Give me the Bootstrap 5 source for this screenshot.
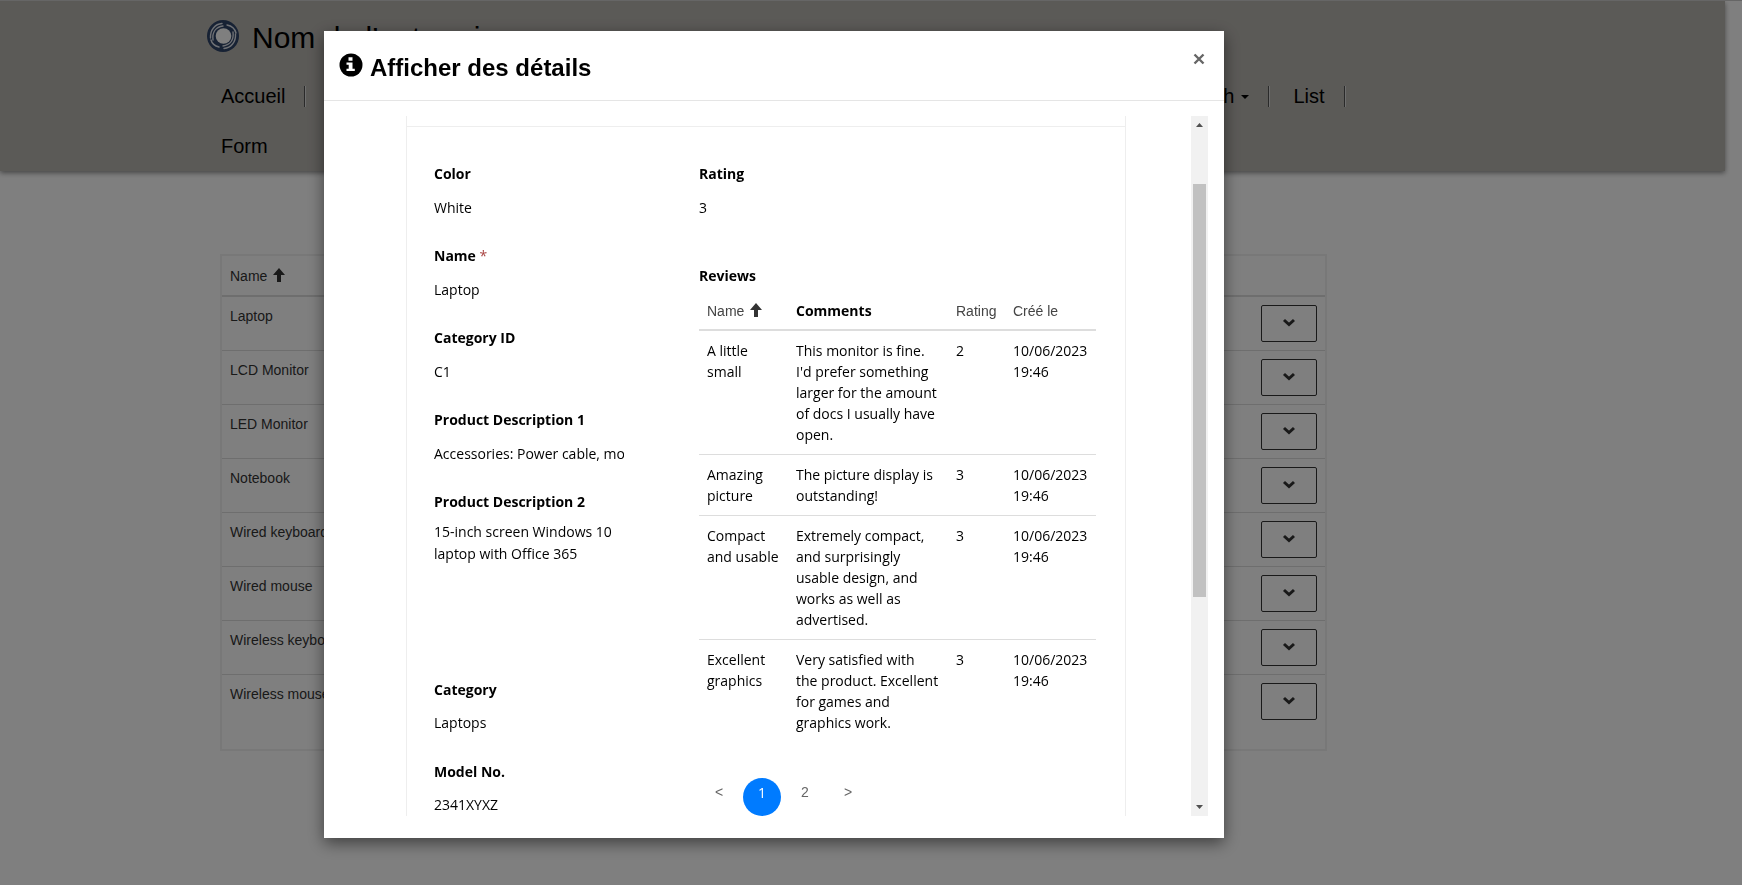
<!DOCTYPE html>
<html lang="fr">
<head>
<meta charset="utf-8">
<meta name="viewport" content="width=device-width, initial-scale=1">
<title>Afficher des détails</title>
<link href="https://cdn.jsdelivr.net/npm/bootstrap@5.3.0/dist/css/bootstrap.min.css" rel="stylesheet">
<style>
body { font-family: "Liberation Sans", Arial, sans-serif; font-size: 14px; line-height: 22px; color: #333; background: #fff; overflow: hidden; padding-right: 17px; border-top: 1px solid #ccc; }
a { color: inherit; text-decoration: none; }
.site-head { background: #b7b4af; height: 170px; padding-left: 12%; box-shadow: 0 2px 5px rgba(0,0,0,.45); color: #000; }
.brand { gap: 13px; height: 70px; font-size: 30px; }
.brand span { padding-top: 3px; }
.menu { font-size: 20px; line-height: 22px; padding-left: 14px; width: 75%; }
.menu li { height: 50px; padding: 14px 21px 0 23px; position: relative; }
.menu li:first-child, .menu li.w-100 { padding-left: 0; }
.menu li:not(.w-100)::after { content: ""; position: absolute; right: 0; top: 15px; width: 2px; height: 21px; border-left: 1px solid #555; border-right: 1px solid #ddd; }
.menu .dropdown-toggle::after { border-width: 4px 4px 0; margin-left: 7px; vertical-align: 4px; }
.listing { margin: 83px 0 0 220px; width: 64.2%; border: 2px solid #f0f0f0; padding-bottom: 20px; }
.listing table { margin: 0; color: #333; --bs-table-color: #333; }
.listing th { font-weight: 400; padding: 8px; height: 40px; border-bottom: 2px solid #ddd; }
.listing td { padding: 8px; border: 0; border-bottom: 1px solid #ddd; height: 54px; }
.listing tr:last-child td { border-bottom: 0; }
.listing td:last-child { text-align: right; }
.sort { margin-left: 2px; vertical-align: -1px; }
.drop { display: inline-flex; align-items: center; justify-content: center; width: 56px; height: 37px; border: 1px solid #333; border-radius: 2px; background: none; padding: 0 0 2px; vertical-align: top; }
.modal-backdrop { --bs-backdrop-opacity: .5; }
.modal { overflow: hidden; }
.modal-dialog { max-width: 900px; margin: 31px 0 0 18.6%; }
.modal-content { height: calc(100vh - 78px); border: 0; border-radius: 0; box-shadow: 0 5px 15px rgba(0,0,0,.5); color: #000; }
.modal-header { height: 70px; padding: 4px 16px 0 15px; border-color: #e5e5e5; border-radius: 0; align-items: center; }
.modal-title { font-size: 24px; line-height: 26px; font-weight: 700; gap: 7px; }
.modal-title svg { margin-bottom: 6px; }
.shut { border: 0; background: none; padding: 0 2px 18px; line-height: 0; }
.modal-body { padding: 15px 16px 22px 82px; min-height: 0; font-family: "Open Sans", "Segoe UI", sans-serif; }
.sheet { width: 720px; border: solid #eee; border-width: 0 1px; overflow: hidden; }
.strip { height: 11px; border-bottom: 1px solid #eee; }
.cols { padding: 36px 28px 0 27px; }
.left-col { width: 265px; }
.lbl { display: block; font-weight: 700; line-height: 22px; }
.fld { height: 82px; }
.fld input, .fld textarea { display: block; border: 0; padding: 0; width: 190px; height: 22px; margin-top: 12px; line-height: 22px; background: none; color: #000; outline: 0; resize: none; overflow: hidden; }
.fld textarea { height: 132px; width: 200px; margin-top: 8px; }
.fld.tall { height: 188px; }
.fld.tight input { margin-top: 11px; }
.req { color: #a94442; font-weight: 400; }
.reviews { table-layout: fixed; width: 397px; margin: 5px 0 36px; line-height: 21px; --bs-table-color: #000; }
.reviews th { font: 14px/20px "Liberation Sans", Arial, sans-serif; color: #444; padding: 8px; height: 38px; border-bottom: 2px solid #ddd; white-space: nowrap; }
.reviews th.strong { font-family: "Open Sans", sans-serif; font-weight: 700; color: #000; }
.reviews td { padding: 9px 0 9px 8px; border-bottom: 1px solid #ddd; }
.reviews tr:last-child td { border-bottom: 0; }
.c1 { width: 89px; } .c2 { width: 160px; } .c3 { width: 57px; } .c4 { width: 91px; }
.pager { gap: 5px; padding-left: 1px; font: 14px/22px "Liberation Sans", Arial, sans-serif; color: #666; }
.pager a { display: block; width: 38px; height: 38px; text-align: center; padding-top: 3px; border-radius: 50%; }
.pager .on { background: #007bff; color: #fff; padding-top: 4px; font-family: "Open Sans", sans-serif; }
.track { width: 17px; background: #f1f1f1; margin-left: auto; padding: 6px 2px; }
.thumb { height: 60%; margin-top: 57px; background: #c1c1c1; }
</style>
</head>
<body>
<header class="site-head">
  <div class="brand d-flex align-items-center">
    <svg width="32" height="32" viewBox="0 0 32 32" fill="none"><circle cx="16" cy="16" r="16" fill="#2f4468"/><circle cx="16.500" cy="16" r="7.800" fill="#fff"/><g stroke="#dfe3ea" stroke-width="1.400" stroke-linecap="round"><path d="M3.500 18C3 10 8 4 15 3.500"/><path d="M6 20C5 12 9 7 16 6"/><path d="M28.500 14C29 22 24 28 17 28.500"/><path d="M26 12c1 8-3 13-10 14"/><path d="M20 5c5 1 8 4 9 8M12 27c-4-1-7-3-8-7"/></g></svg>
    <span>Nom de l’entreprise</span>
  </div>
  <nav>
    <ul class="menu list-unstyled d-flex flex-wrap m-0">
      <li><a href="#">Accueil</a></li>
      <li class="flex-grow-1 text-end"><a href="#" class="dropdown-toggle">Search</a></li>
      <li><a href="#">List</a></li>
      <li class="w-100"><a href="#">Form</a></li>
    </ul>
  </nav>
</header>
<main class="listing">
  <table class="table">
    <thead><tr><th scope="col">Name <svg class="sort" width="12" height="14" viewBox="0 0 12 14"><path d="M6 0l6 7H8v7H4V7H0z" fill="#333"/></svg></th><th></th></tr></thead>
    <tbody>
      <tr><td>Laptop</td><td><button class="drop" aria-label="Actions"><svg width="14" height="9" viewBox="0 0 14 9"><path d="M2 2l5 4.500 5-4.500" fill="none" stroke="#333" stroke-width="3"/></svg></button></td></tr>
      <tr><td>LCD Monitor</td><td><button class="drop" aria-label="Actions"><svg width="14" height="9" viewBox="0 0 14 9"><path d="M2 2l5 4.500 5-4.500" fill="none" stroke="#333" stroke-width="3"/></svg></button></td></tr>
      <tr><td>LED Monitor</td><td><button class="drop" aria-label="Actions"><svg width="14" height="9" viewBox="0 0 14 9"><path d="M2 2l5 4.500 5-4.500" fill="none" stroke="#333" stroke-width="3"/></svg></button></td></tr>
      <tr><td>Notebook</td><td><button class="drop" aria-label="Actions"><svg width="14" height="9" viewBox="0 0 14 9"><path d="M2 2l5 4.500 5-4.500" fill="none" stroke="#333" stroke-width="3"/></svg></button></td></tr>
      <tr><td>Wired keyboard</td><td><button class="drop" aria-label="Actions"><svg width="14" height="9" viewBox="0 0 14 9"><path d="M2 2l5 4.500 5-4.500" fill="none" stroke="#333" stroke-width="3"/></svg></button></td></tr>
      <tr><td>Wired mouse</td><td><button class="drop" aria-label="Actions"><svg width="14" height="9" viewBox="0 0 14 9"><path d="M2 2l5 4.500 5-4.500" fill="none" stroke="#333" stroke-width="3"/></svg></button></td></tr>
      <tr><td>Wireless keyboard</td><td><button class="drop" aria-label="Actions"><svg width="14" height="9" viewBox="0 0 14 9"><path d="M2 2l5 4.500 5-4.500" fill="none" stroke="#333" stroke-width="3"/></svg></button></td></tr>
      <tr><td>Wireless mouse</td><td><button class="drop" aria-label="Actions"><svg width="14" height="9" viewBox="0 0 14 9"><path d="M2 2l5 4.500 5-4.500" fill="none" stroke="#333" stroke-width="3"/></svg></button></td></tr>
    </tbody>
  </table>
</main>

<div class="modal-backdrop show"></div>
<div class="modal d-block" role="dialog" aria-labelledby="dlg-title">
  <div class="modal-dialog">
    <div class="modal-content">
      <div class="modal-header">
        <h1 class="modal-title d-flex align-items-center" id="dlg-title"><svg width="24" height="24" viewBox="0 0 24 24"><circle cx="12" cy="12" r="11.500"/><path d="M9.500 4.200h4v3.600h-4zM7.500 9.500h6v6.200h2.300V18H7.500v-2.300h2.200v-3.900H7.500z" fill="#fff"/></svg><span>Afficher des détails</span></h1>
        <button class="shut" aria-label="Fermer"><svg width="14" height="14" viewBox="0 0 14 14"><path d="M2.500 2.500l9 9m0-9l-9 9" stroke="#666" stroke-width="2.400"/></svg></button>
      </div>
      <div class="modal-body d-flex">
        <div class="sheet">
          <div class="strip"></div>
          <div class="cols d-flex">
            <div class="left-col flex-shrink-0">
              <div class="fld"><label class="lbl" for="f1">Color</label><input id="f1" readonly value="White"></div>
              <div class="fld"><label class="lbl" for="f2">Name <span class="req">*</span></label><input id="f2" readonly value="Laptop"></div>
              <div class="fld"><label class="lbl" for="f3">Category ID</label><input id="f3" readonly value="C1"></div>
              <div class="fld"><label class="lbl" for="f4">Product Description 1</label><input id="f4" readonly value="Accessories: Power cable, mouse"></div>
              <div class="fld tall"><label class="lbl" for="f5">Product Description 2</label><textarea id="f5" readonly>15-inch screen Windows 10 laptop with Office 365</textarea></div>
              <div class="fld tight"><label class="lbl" for="f6">Category</label><input id="f6" readonly value="Laptops"></div>
              <div class="fld tight"><label class="lbl" for="f7">Model No.</label><input id="f7" readonly value="2341XYXZ"></div>
            </div>
            <div>
              <div class="fld"><label class="lbl" for="f8">Rating</label><input id="f8" readonly value="3"></div>
              <div class="lbl mt-3 pt-1">Reviews</div>
              <table class="table reviews">
                <colgroup><col class="c1"><col class="c2"><col class="c3"><col class="c4"></colgroup>
                <thead><tr><th>Name <svg class="sort" width="12" height="14" viewBox="0 0 12 14"><path d="M6 0l6 7H8v7H4V7H0z" fill="#333"/></svg></th><th class="strong">Comments</th><th>Rating</th><th>Créé le</th></tr></thead>
                <tbody>
                  <tr><td>A little<br>small</td><td>This monitor is fine.<br>I'd prefer something<br>larger for the amount<br>of docs I usually have<br>open.</td><td>2</td><td>10/06/2023 19:46</td></tr>
                  <tr><td>Amazing picture</td><td>The picture display is<br>outstanding!</td><td>3</td><td>10/06/2023 19:46</td></tr>
                  <tr><td>Compact<br>and usable</td><td>Extremely compact,<br>and surprisingly<br>usable design, and<br>works as well as<br>advertised.</td><td>3</td><td>10/06/2023 19:46</td></tr>
                  <tr><td>Excellent graphics</td><td>Very satisfied with<br>the product. Excellent<br>for games and<br>graphics work.</td><td>3</td><td>10/06/2023 19:46</td></tr>
                </tbody>
              </table>
              <nav class="pager d-flex"><a href="#">&lt;</a><a href="#" class="on">1</a><a href="#">2</a><a href="#">&gt;</a></nav>
            </div>
          </div>
        </div>
        <div class="track d-flex flex-column align-items-stretch">
          <svg class="mx-auto" width="7" height="5" viewBox="0 0 7 5"><path d="M0 5l3.500-4L7 5z" fill="#505050"/></svg>
          <div class="thumb"></div>
          <svg class="mx-auto mt-auto" width="7" height="5" viewBox="0 0 7 5"><path d="M0 0l3.500 4L7 0z" fill="#505050"/></svg>
        </div>
      </div>
    </div>
  </div>
</div>
<script src="https://cdn.jsdelivr.net/npm/bootstrap@5.3.0/dist/js/bootstrap.bundle.min.js"></script>
</body>
</html>
